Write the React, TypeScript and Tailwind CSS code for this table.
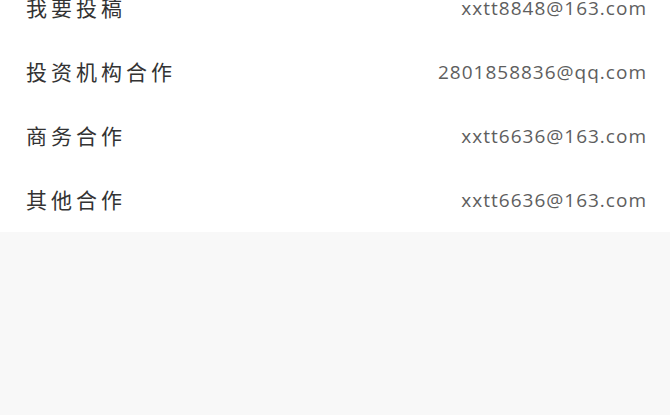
const items = [
  { label: "我要投稿", mail: "xxtt8848@163.com" },
  { label: "投资机构合作", mail: "2801858836@qq.com" },
  { label: "商务合作", mail: "xxtt6636@163.com" },
  { label: "其他合作", mail: "xxtt6636@163.com" },
];

export default function App() {
  return (
    <div className="h-[415px] w-full overflow-hidden bg-[#f8f8f8] font-['Noto_Sans_CJK_SC',sans-serif]">
      <div className="-mt-[24px] bg-white">
        {items.map((it) => (
          <div key={it.label} className="flex h-16 items-center justify-between pl-[26px] pr-[23px]">
            <span className="text-[21px] tracking-[4px] text-[#333]">{it.label}</span>
            <span className="font-['Open_Sans',sans-serif] text-[19px] tracking-[1px] text-[#5e5e5e]">{it.mail}</span>
          </div>
        ))}
      </div>
    </div>
  );
}
